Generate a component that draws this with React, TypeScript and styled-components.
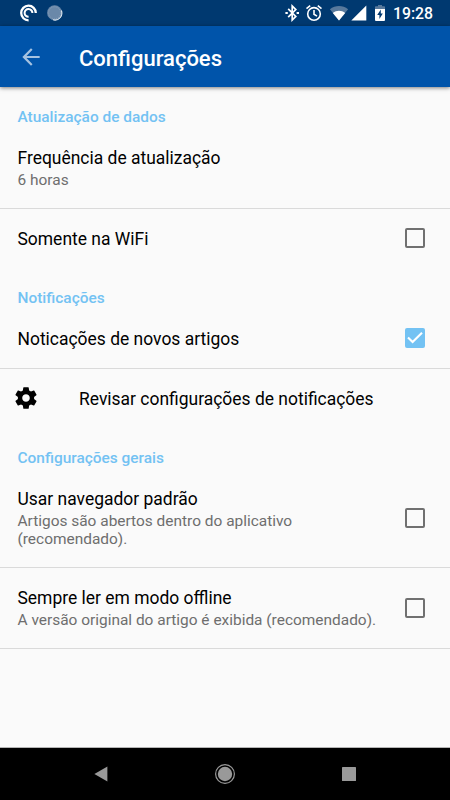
import React from "react";
import styled, { createGlobalStyle } from "styled-components";

const GlobalStyle = createGlobalStyle`
  * { box-sizing: border-box; }
  body { margin: 0; }
`;

const Screen = styled.div`
  width: 450px;
  height: 800px;
  display: flex;
  flex-direction: column;
  overflow: hidden;
  background: #fafafa;
  color: #000;
  font-family: Roboto, sans-serif;
`;

const StatusBar = styled.header`
  height: 26px;
  flex: none;
  display: flex;
  align-items: center;
  justify-content: space-between;
  padding: 0 17px 0 19px;
  background: #003970;
  color: #fff;
`;

const StatusGroup = styled.div`
  display: flex;
  align-items: center;
  height: 26px;
  svg { display: block; }
`;

const Gap = styled.span<{ $w: number }>`
  flex: none;
  width: ${(p) => p.$w}px;
`;

const Clock = styled.span`
  margin-left: 8px;
  font-size: 15.8px;
  font-weight: 500;
  line-height: 26px;
  padding-top: 2px;
  width: 40px;
  white-space: nowrap;
`;

const Toolbar = styled.div`
  height: 61px;
  flex: none;
  display: flex;
  align-items: center;
  padding-left: 18px;
  background: #0054aa;
  box-shadow: 0 1px 4px rgba(0, 0, 0, 0.5);
  z-index: 1;
`;

const Title = styled.h1`
  margin: 4px 0 0 35px;
  color: #fff;
  font-size: 22px;
  font-weight: 500;
  line-height: 28px;
`;

const Content = styled.main`
  flex: 1;
  border-bottom: 1px solid #b4b4b4;
`;

const Category = styled.h2<{ $first?: boolean }>`
  margin: 0;
  height: ${(p) => (p.$first ? 43 : 40)}px;
  padding: ${(p) => (p.$first ? 20 : 19)}px 18px 0 17.5px;
  color: #73c2f3;
  font-size: 15.43px;
  font-weight: 500;
  line-height: 20px;
`;

const Row = styled.section<{ $height: number; $divider?: boolean }>`
  height: ${(p) => p.$height}px;
  display: flex;
  align-items: center;
  padding: 0 25px 0 17.5px;
  border-bottom: ${(p) => (p.$divider ? "1px solid #dadada" : "none")};
`;

const RowText = styled.div<{ $lift: number }>`
  flex: 1;
  min-width: 0;
  padding-bottom: ${(p) => p.$lift}px;
`;

const RowTitle = styled.div`
  font-size: 17.47px;
  line-height: 22px;
  white-space: nowrap;
`;

const Summary = styled.div`
  margin-top: 2px;
  color: #6e6e6e;
  font-size: 15.45px;
  line-height: 18px;
  white-space: pre;
`;

const LeadingIcon = styled.div`
  width: 62.5px;
  margin-left: -5px;
  margin-right: 4px;
  padding-bottom: 2px;
  svg { display: block; }
`;

const Check = styled.span<{ $on?: boolean; $raised?: boolean }>`
  flex: none;
  width: 20px;
  height: 20px;
  margin-bottom: ${(p) => (p.$raised ? 2 : 1)}px;
  border: 2px solid ${(p) => (p.$on ? "#73c2f3" : "#707070")};
  background: ${(p) => (p.$on ? "#73c2f3" : "transparent")};
  border-radius: 2px;
  svg { display: block; margin: -2px; }
`;

const NavBar = styled.nav`
  height: 52px;
  flex: none;
  display: grid;
  grid-template-columns: 124px 124px 124px;
  justify-content: center;
  align-items: center;
  justify-items: center;
  background: #000;
  svg { display: block; }
`;

function Checkbox({ checked, raised }: { checked?: boolean; raised?: boolean }) {
  return (
    <Check $on={checked} $raised={raised} role="checkbox" aria-checked={!!checked}>
      {checked && (
        <svg width="20" height="20" viewBox="0 0 20 20" fill="none">
          <path d="M3 9.5 7.6 14.1 17 4.7" stroke="#fff" strokeWidth="2.1" />
        </svg>
      )}
    </Check>
  );
}

type PreferenceProps = {
  title: string;
  height: number;
  lift?: number;
  summary?: string;
  divider?: boolean;
  icon?: React.ReactNode;
  control?: React.ReactNode;
};

function Preference({ title, height, lift = 1, summary, divider, icon, control }: PreferenceProps) {
  return (
    <Row $height={height} $divider={divider}>
      {icon && <LeadingIcon>{icon}</LeadingIcon>}
      <RowText $lift={lift}>
        <RowTitle>{title}</RowTitle>
        {summary && <Summary>{summary}</Summary>}
      </RowText>
      {control}
    </Row>
  );
}

const PodcastIcon = () => (
  <svg width="20" height="20" viewBox="0 0 20 20" fill="none" stroke="#fff">
    <path d="M9.6 17.3A7.3 7.3 0 1 1 16.8 10" strokeWidth="2.3" />
    <path d="M9.6 13.8A3.9 3.9 0 1 1 13.4 10" strokeWidth="2" />
  </svg>
);

const SyncIcon = () => (
  <svg width="18" height="18" viewBox="0 0 18 18" fill="none">
    <circle cx="8.6" cy="8.8" r="7.5" fill="#6a88a9" />
    <circle cx="8.6" cy="8.8" r="6" stroke="#91a8c0" strokeWidth=".8" strokeDasharray="1 1.2" />
    <path d="M15.4 6.5A7 7 0 0 1 7 15.8" stroke="#e6edf4" strokeWidth="1.1" />
  </svg>
);

const BluetoothIcon = () => (
  <svg width="16" height="18" viewBox="0 0 16 18" fill="none" stroke="#fff" strokeWidth="1.7">
    <path d="m4.2 4.8 7.6 7.6L8.2 16V2l3.6 3.6-7.6 7.6" />
    <path d="M1.4 9h2.4M12.6 9h2.4" strokeWidth="2" />
  </svg>
);

const AlarmIcon = () => (
  <svg width="18" height="18" viewBox="0 0 18 18" fill="none" stroke="#fff" strokeWidth="1.6">
    <circle cx="9" cy="9.9" r="6.3" />
    <path d="M9 6.1v4.2l3 1.8M1.5 4.6l3.7-3M16.5 4.6l-3.7-3" />
  </svg>
);

const WifiIcon = () => (
  <svg width="20" height="18" viewBox="0 0 20 18">
    <path d="M.9 5.2C6.3.9 13.7.9 19.1 5.2L10 16.5Z" fill="#58799c" />
    <path d="M3.8 8.9c3.8-2.9 8.6-2.9 12.4 0L10 16.5Z" fill="#fff" />
  </svg>
);

const SignalIcon = () => (
  <svg width="16" height="18" viewBox="0 0 16 18">
    <path d="M15.3 1.5v15H.3Z" fill="#fff" />
  </svg>
);

const BatteryIcon = () => (
  <svg width="10" height="18" viewBox="0 0 10 18">
    <path d="M0 5V3q0-.8.8-.8H3V1h4v1.2h2.2q.8 0 .8.8v2Z" fill="#58799c" />
    <path d="M0 5h10v11q0 1-1 1H1q-1 0-1-1Z" fill="#fff" />
    <path d="M5.8 5.5 2.2 11h2.2v4L7.8 9.5h-2Z" fill="#003970" />
  </svg>
);

const BackArrow = () => (
  <svg width="26" height="26" viewBox="0 0 24 24" fill="#a6c3e1">
    <path d="M20 11H7.83l5.59-5.59L12 4l-8 8 8 8 1.41-1.41L7.83 13H20v-2z" />
  </svg>
);

const GearIcon = () => (
  <svg width="26" height="26" viewBox="0 0 24 24">
    <path d="M19.43 12.98c.04-.32.07-.64.07-.98s-.03-.66-.07-.98l2.11-1.65c.19-.15.24-.42.12-.64l-2-3.46c-.12-.22-.39-.3-.61-.22l-2.49 1c-.52-.4-1.08-.73-1.69-.98l-.38-2.65C14.46 2.18 14.25 2 14 2h-4c-.25 0-.46.18-.49.42l-.38 2.65c-.61.25-1.17.59-1.69.98l-2.49-1c-.23-.09-.49 0-.61.22l-2 3.46c-.13.22-.07.49.12.64l2.11 1.65c-.04.32-.07.65-.07.98s.03.66.07.98l-2.11 1.65c-.19.15-.24.42-.12.64l2 3.46c.12.22.39.3.61.22l2.49-1c.52.4 1.08.73 1.69.98l.38 2.65c.03.24.24.42.49.42h4c.25 0 .46-.18.49-.42l.38-2.65c.61-.25 1.17-.59 1.69-.98l2.49 1c.23.09.49 0 .61-.22l2-3.46c.12-.22.07-.49-.12-.64l-2.11-1.65zM12 15.5c-1.93 0-3.5-1.57-3.5-3.5s1.57-3.5 3.5-3.5 3.5 1.57 3.5 3.5-1.57 3.5-3.5 3.5z" />
  </svg>
);

export default function App() {
  return (
    <Screen>
      <GlobalStyle />
      <StatusBar>
        <StatusGroup>
          <PodcastIcon />
          <Gap $w={7} />
          <SyncIcon />
        </StatusGroup>
        <StatusGroup>
          <BluetoothIcon />
          <Gap $w={5} />
          <AlarmIcon />
          <Gap $w={6} />
          <WifiIcon />
          <Gap $w={2} />
          <SignalIcon />
          <Gap $w={8} />
          <BatteryIcon />
          <Clock>19:28</Clock>
        </StatusGroup>
      </StatusBar>
      <Toolbar>
        <BackArrow />
        <Title>Configurações</Title>
      </Toolbar>
      <Content>
        <Category $first>Atualização de dados</Category>
        <Preference height={79} lift={3} divider title="Frequência de atualização" summary="6 horas" />
        <Preference height={60} title="Somente na WiFi" control={<Checkbox raised />} />
        <Category>Notificações</Category>
        <Preference height={60} lift={0} divider title="Noticações de novos artigos" control={<Checkbox checked />} />
        <Preference height={60} title="Revisar configurações de notificações" icon={<GearIcon />} />
        <Category>Configurações gerais</Category>
        <Preference
          height={99}
          divider
          title="Usar navegador padrão"
          summary={"Artigos são abertos dentro do aplicativo\n(recomendado)."}
          control={<Checkbox />}
        />
        <Preference
          height={81}
          divider
          title="Sempre ler em modo offline"
          summary="A versão original do artigo é exibida (recomendado)."
          control={<Checkbox />}
        />
      </Content>
      <NavBar>
        <svg width="14" height="16" viewBox="0 0 14 16">
          <path d="M.4 8 13.4.6v14.8Z" fill="#999" />
        </svg>
        <svg width="22" height="22" viewBox="0 0 22 22">
          <circle cx="11" cy="11" r="9.4" fill="none" stroke="#999" strokeWidth="1.2" />
          <circle cx="11" cy="11" r="7.2" fill="#999" />
        </svg>
        <svg width="14" height="14" viewBox="0 0 14 14">
          <rect width="14" height="14" rx=".6" fill="#999" />
        </svg>
      </NavBar>
    </Screen>
  );
}
